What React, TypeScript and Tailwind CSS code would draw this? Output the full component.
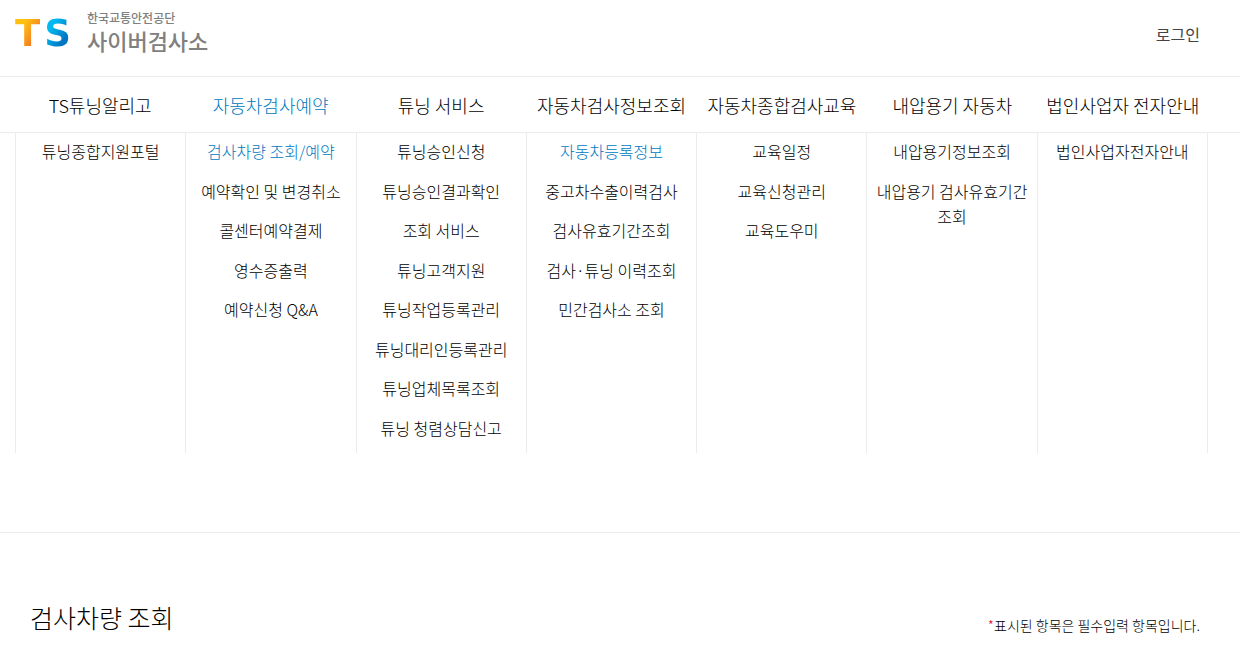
import clsx from 'clsx'

interface MenuItem {
  label: string
  active?: boolean
}

interface MenuGroup extends MenuItem {
  items: MenuItem[]
}

const menu: MenuGroup[] = [
  {
    label: 'TS튜닝알리고',
    items: [{ label: '튜닝종합지원포털' }],
  },
  {
    label: '자동차검사예약',
    active: true,
    items: [
      { label: '검사차량 조회/예약', active: true },
      { label: '예약확인 및 변경취소' },
      { label: '콜센터예약결제' },
      { label: '영수증출력' },
      { label: '예약신청 Q&A' },
    ],
  },
  {
    label: '튜닝 서비스',
    items: [
      { label: '튜닝승인신청' },
      { label: '튜닝승인결과확인' },
      { label: '조회 서비스' },
      { label: '튜닝고객지원' },
      { label: '튜닝작업등록관리' },
      { label: '튜닝대리인등록관리' },
      { label: '튜닝업체목록조회' },
      { label: '튜닝 청렴상담신고' },
    ],
  },
  {
    label: '자동차검사정보조회',
    items: [
      { label: '자동차등록정보', active: true },
      { label: '중고차수출이력검사' },
      { label: '검사유효기간조회' },
      { label: '검사·튜닝 이력조회' },
      { label: '민간검사소 조회' },
    ],
  },
  {
    label: '자동차종합검사교육',
    items: [{ label: '교육일정' }, { label: '교육신청관리' }, { label: '교육도우미' }],
  },
  {
    label: '내압용기 자동차',
    items: [{ label: '내압용기정보조회' }, { label: '내압용기 검사유효기간 조회' }],
  },
  {
    label: '법인사업자 전자안내',
    items: [{ label: '법인사업자전자안내' }],
  },
]

function Logo() {
  return (
    <a href="#" className="flex items-center gap-4">
      <span className="flex gap-1 font-['DejaVu_Sans',sans-serif] text-[37px] font-bold leading-10">
        <span className="bg-linear-to-br from-[#fdc010] from-30% to-[#f57f20] to-70% bg-clip-text text-transparent">T</span>
        <span className="bg-linear-to-br from-[#00b9f0] from-30% to-[#0075c4] to-70% bg-clip-text text-transparent">S</span>
      </span>
      <span className="flex flex-col pb-1 text-[#808080]">
        <span className="text-[12px] font-medium leading-4">한국교통안전공단</span>
        <span className="text-[22px] font-medium leading-7">사이버검사소</span>
      </span>
    </a>
  )
}

export default function App() {
  return (
    <div className="min-h-screen bg-white font-['Noto_Sans_CJK_KR',sans-serif] text-black break-keep">
      <header className="border-b border-[#ececec]">
        <div className="flex h-[77px] items-center justify-between border-b border-[#ececec] pb-2 pl-[15px] pr-10">
          <Logo />
          <a href="#" className="text-[16px] leading-6 text-[#444444]">로그인</a>
        </div>

        <nav>
          <div className="border-b border-[#ececec]">
            <ul className="ml-[15px] mr-8 grid grid-cols-7">
              {menu.map(group => (
                <li key={group.label} className="flex h-[55px] items-center justify-center whitespace-nowrap">
                  <a
                    href="#"
                    className={clsx('text-[18px] font-light leading-7', group.active ? 'text-[#0079c1]' : 'text-black')}
                  >
                    {group.label}
                  </a>
                </li>
              ))}
            </ul>
          </div>

          {/* 하위 메뉴 */}
          <div className="mb-[79px] ml-[15px] mr-8 grid grid-cols-7 border-l border-[#ececec]">
            {menu.map(group => (
              <ul key={group.label} className="border-r border-[#ececec] px-1 pb-3 pt-1.5 text-center">
                {group.items.map(item => (
                  <li
                    key={item.label}
                    className="text-[16px] font-light leading-[25px] not-last:odd:mb-[15px] not-last:even:mb-[14px]"
                  >
                    <a href="#" className={clsx(item.active && 'text-[#0079c1]')}>
                      {item.label}
                    </a>
                  </li>
                ))}
              </ul>
            ))}
          </div>
        </nav>
      </header>

      <main className="flex items-end justify-between pl-[30px] pr-10 pt-[66px]">
        <h1 className="text-[25px] font-light leading-9">검사차량 조회</h1>
        <p className="text-[14px] font-light leading-5">
          <span className="text-[#e60033]">*</span>표시된 항목은 필수입력 항목입니다.
        </p>
      </main>
    </div>
  )
}
